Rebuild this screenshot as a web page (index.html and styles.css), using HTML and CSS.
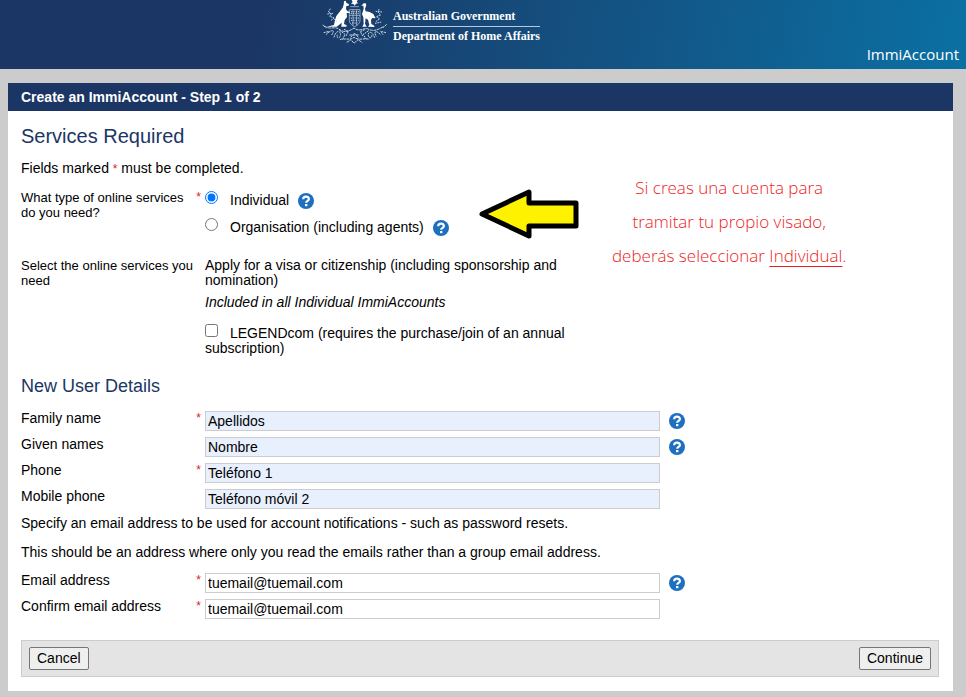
FILE: index.html
```html
<!DOCTYPE html>
<html lang="en">
<head>
  <meta charset="utf-8">
  <title>Create an ImmiAccount</title>
  <link rel="stylesheet" href="styles.css">
</head>
<body>

<!-- shared help icon -->
<svg class="defs" width="0" height="0">
  <symbol id="help" viewBox="0 0 16 16">
    <circle cx="8" cy="8" r="8" fill="#1d70bf" />
    <path d="M5.2 6.2 C5.2 2.9 10.9 2.9 10.9 6 C10.9 7.9 8.2 7.8 8.2 9.8" fill="none" stroke="#fff" stroke-width="2.2" />
    <rect x="7" y="11" width="2.4" height="2.2" fill="#fff" />
  </symbol>
</svg>

<header class="header">
  <div class="brand">
    <svg class="crest" viewBox="36 0 198 135" fill="none" stroke="#c9d6e6" stroke-width="3">
      <!-- kangaroo -->
      <path fill="#fff" stroke="none" d="M102 4 L107 2 L109 8 L117 13 L116 17 L109 18 L108 28 L113 34 L120 35 L119 39 L110 39 L111 51 L104 60 L102 72 L110 76 L109 80 L94 80 L95 68 L87 75 L80 80 L50 80 L72 75 L75 60 L79 48 L89 35 L98 23 L101 14 Z" />
      <!-- emu -->
      <path fill="#fff" stroke="none" d="M154 17 L161 10 L167 10 L169 15 L165 27 L167 34 L179 36 L190 42 L197 55 L187 54 L183 60 L184 72 L193 77 L193 81 L174 80 L178 75 L174 59 L167 55 L165 71 L170 80 L157 80 L161 72 L160 52 L156 43 L161 26 L160 17 Z" />
      <!-- star and shield -->
      <path fill="#fff" stroke="none" d="M125 0 H143 L140 6 L145 10 L138 11 L134 17 L130 12 L123 11 L128 6 Z" />
      <path stroke-width="2" d="M121 20 H147 M118 29 H150 V62 C150 71 139 78 134 80 C129 78 118 71 118 62 Z M118 46 H150 M129 29 V76 M140 29 V76" />
      <path stroke-width="3" stroke-dasharray="4 3" d="M123 35 H147 M122 40 H146 M122 54 H148 M123 61 H146 M126 69 H142" />
      <!-- wattle -->
      <path stroke-dasharray="5 2" d="M61 26 L55 36 L65 42 L59 49 L73 54 L63 61 M52 42 L69 40 M73 58 L82 66 M207 27 L205 38 L212 45 L199 50 L209 57 L197 65 M197 34 L216 36 M195 70 L215 66" />
      <path stroke-dasharray="9 2" d="M44 79 C63 90 73 78 86 87 S110 99 132 84 C153 99 160 80 177 88 S207 87 222 79 M38 75 L49 83 M230 73 L219 83" />
      <path stroke-dasharray="6 2" d="M41 98 L57 94 L49 104 M55 98 C68 87 75 91 65 105 M72 112 C78 88 94 91 91 107 C88 119 78 113 82 104 M88 90 L105 103 L98 118 M102 88 L115 94 L108 108 M228 98 L212 94 L219 104 M211 103 C197 90 190 92 199 110 M194 113 C187 92 173 93 175 107 C179 119 188 112 185 105 M176 92 L160 103 L167 117 M164 89 L151 95 L158 108" />
      <path stroke-dasharray="8 2" d="M90 119 C102 113 117 123 132 112 C148 123 164 113 178 118 M110 127 L123 119 L132 130 L144 119 L157 128 M118 105 H148 M122 112 L134 99 L145 112" />
    </svg>
    <div class="brand-text">
      <div class="gov">Australian Government</div>
      <div class="dept">Department of Home Affairs</div>
    </div>
  </div>
  <div class="app-name">ImmiAccount</div>
</header>

<main class="panel">
  <div class="panel-title">Create an ImmiAccount - Step 1 of 2</div>

  <form class="content">
    <section class="services">
      <h1>Services Required</h1>
      <p class="intro">Fields marked <span class="req">*</span> must be completed.</p>

      <div class="row type-row" role="radiogroup" aria-labelledby="typeLabel">
        <div class="row-label"><span id="typeLabel">What type of online services<br>do you need?</span><span class="req">*</span></div>
        <div class="options">
          <div class="option">
            <input type="radio" name="type" id="individual" checked>
            <label for="individual">Individual</label>
            <button type="button" class="help" aria-label="Help"><svg><use href="#help" /></svg></button>
          </div>
          <div class="option">
            <input type="radio" name="type" id="organisation">
            <label for="organisation">Organisation (including agents)</label>
            <button type="button" class="help" aria-label="Help"><svg><use href="#help" /></svg></button>
          </div>
        </div>
      </div>

      <div class="row online-row">
        <div class="row-label wide">Select the online services you need</div>
        <div class="online">
          <p>Apply for a visa or citizenship (including sponsorship and nomination)</p>
          <p class="included">Included in all Individual ImmiAccounts</p>
          <p><input type="checkbox" id="legend"><label for="legend">LEGENDcom (requires the purchase/join of an annual subscription)</label></p>
        </div>
      </div>

      <svg class="arrow" viewBox="0 0 100 50">
        <path d="M3 25 L50 3 V14 H97 V37 H50 V47 Z" fill="#fff200" stroke="#000" stroke-width="5" stroke-linejoin="round" />
      </svg>
      <p class="note" lang="es">Si creas una cuenta para<br>tramitar tu propio visado,<br>deberás seleccionar <u>Individual</u>.</p>
    </section>

    <h2>New User Details</h2>
    <div class="fields">
      <div class="row">
        <div class="row-label"><label for="family">Family name</label><span class="req">*</span></div>
        <input type="text" class="filled" id="family" value="Apellidos">
        <button type="button" class="help" aria-label="Help"><svg><use href="#help" /></svg></button>
      </div>
      <div class="row">
        <div class="row-label"><label for="given">Given names</label></div>
        <input type="text" class="filled" id="given" value="Nombre">
        <button type="button" class="help" aria-label="Help"><svg><use href="#help" /></svg></button>
      </div>
      <div class="row">
        <div class="row-label"><label for="phone">Phone</label><span class="req">*</span></div>
        <input type="text" class="filled" id="phone" value="Teléfono 1">
      </div>
      <div class="row">
        <div class="row-label"><label for="mobile">Mobile phone</label></div>
        <input type="text" class="filled" id="mobile" value="Teléfono móvil 2">
      </div>
    </div>

    <div class="email-info">
      <p>Specify an email address to be used for account notifications - such as password resets.</p>
      <p>This should be an address where only you read the emails rather than a group email address.</p>
    </div>

    <div class="fields">
      <div class="row">
        <div class="row-label"><label for="email">Email address</label><span class="req">*</span></div>
        <input type="text" id="email" value="tuemail@tuemail.com">
        <button type="button" class="help" aria-label="Help"><svg><use href="#help" /></svg></button>
      </div>
      <div class="row">
        <div class="row-label"><label for="email2">Confirm email address</label><span class="req">*</span></div>
        <input type="text" id="email2" value="tuemail@tuemail.com">
      </div>
    </div>

    <div class="actions">
      <button type="button" class="btn">Cancel</button>
      <button type="button" class="btn">Continue</button>
    </div>
  </form>
</main>

</body>
</html>
```
FILE: styles.css
```css
* {
  box-sizing: border-box;
}
body {
  margin: 0;
  background: #ccc;
  color: #000;
  font: 14px/15px "Liberation Sans", Arial, sans-serif;
}
h1, h2, p {
  margin: 0;
}
.defs {
  position: absolute;
}

/* header */
.header {
  display: grid;
  grid-template-columns: 1fr auto 1fr;
  height: 69px;
  background: linear-gradient(100deg, #1b3664 0%, #1b3664 27%, #0b70a3 100%);
  color: #fff;
}
.brand {
  grid-column: 2;
  display: flex;
  gap: 5px;
  margin-right: 104px;
}
.crest {
  width: 66px;
  height: 45px;
}
.brand-text {
  padding-top: 8px;
  font: bold 12px/17px "Liberation Serif", "Times New Roman", serif;
  white-space: nowrap;
}
.dept {
  margin-top: 1px;
  padding-top: 1px;
  border-top: 1px solid #b9c8da;
}
.app-name {
  align-self: end;
  justify-self: end;
  padding: 0 7px 5px 0;
  font: 15px/20px "Open Sans", sans-serif;
}

/* panel */
.panel {
  margin: 14px 13px 6px 8px;
  background: #fff;
}
.panel-title {
  padding: 0 13px;
  background: #1b3664;
  color: #fff;
  font-weight: bold;
  line-height: 28px;
}
.content {
  padding: 13px 14px 14px 13px;
}
h1, h2 {
  color: #1b3664;
  font-weight: normal;
  line-height: 24px;
}
h1 {
  font-size: 20px;
}
h2 {
  margin: 18px 0 13px;
  font-size: 18px;
}
.req {
  color: #d22;
  font-size: 12px;
}

/* rows */
.row {
  display: flex;
  align-items: flex-start;
}
.row-label {
  display: flex;
  justify-content: space-between;
  flex: 0 0 184px;
  padding-right: 4px;
}
.services .row-label {
  font-size: 13px;
}
.row-label.wide {
  padding-right: 0;
}
.help {
  flex: none;
  width: 16px;
  height: 16px;
  margin-left: 9px;
  padding: 0;
  border: 0;
  background: none;
}
.help svg {
  display: block;
  width: 16px;
  height: 16px;
}

/* services */
.services {
  position: relative;
}
.intro {
  padding: 13px 0;
}
.options {
  display: grid;
  gap: 9px;
  padding-top: 1px;
}
.option {
  display: flex;
  align-items: flex-start;
}
.option label, .option .help {
  margin-top: 2px;
}
input[type="radio"], input[type="checkbox"] {
  width: 13px;
  height: 13px;
  margin: 0 12px 0 0;
}
.online-row {
  padding-top: 22px;
}
.online {
  width: 365px;
}
.included {
  padding: 7px 0 14px;
  font-style: italic;
}
input[type="checkbox"] {
  vertical-align: 1px;
}
.arrow {
  position: absolute;
  top: 65px;
  left: 458px;
  width: 100px;
  height: 50px;
}
.note {
  position: absolute;
  top: 47px;
  left: 591px;
  color: #ed1c24;
  font: 300 17px/34px "Open Sans", sans-serif;
  text-align: center;
  white-space: nowrap;
}
.note u {
  text-underline-offset: 4px;
}

/* details */
.fields {
  display: grid;
  gap: 6px;
}
input[type="text"] {
  flex: 0 1 455px;
  min-width: 0;
  height: 20px;
  padding: 0 2px;
  border: 1px solid #ccc;
  background: #fff;
  font: inherit;
}
input.filled {
  background: #e8f0fe;
}
.fields .help {
  margin-top: 2px;
}
.email-info {
  display: grid;
  gap: 14px;
  padding: 7px 0 13px;
}

/* buttons */
.actions {
  display: flex;
  justify-content: space-between;
  margin-top: 21px;
  padding: 6px 7px;
  border: 1px solid #ccc;
  background: #e4e4e4;
}
.btn {
  height: 23px;
  padding: 0 7px;
  border: 1px solid #767676;
  border-radius: 2px;
  background: #efefef;
  color: #000;
  font: inherit;
}
```
